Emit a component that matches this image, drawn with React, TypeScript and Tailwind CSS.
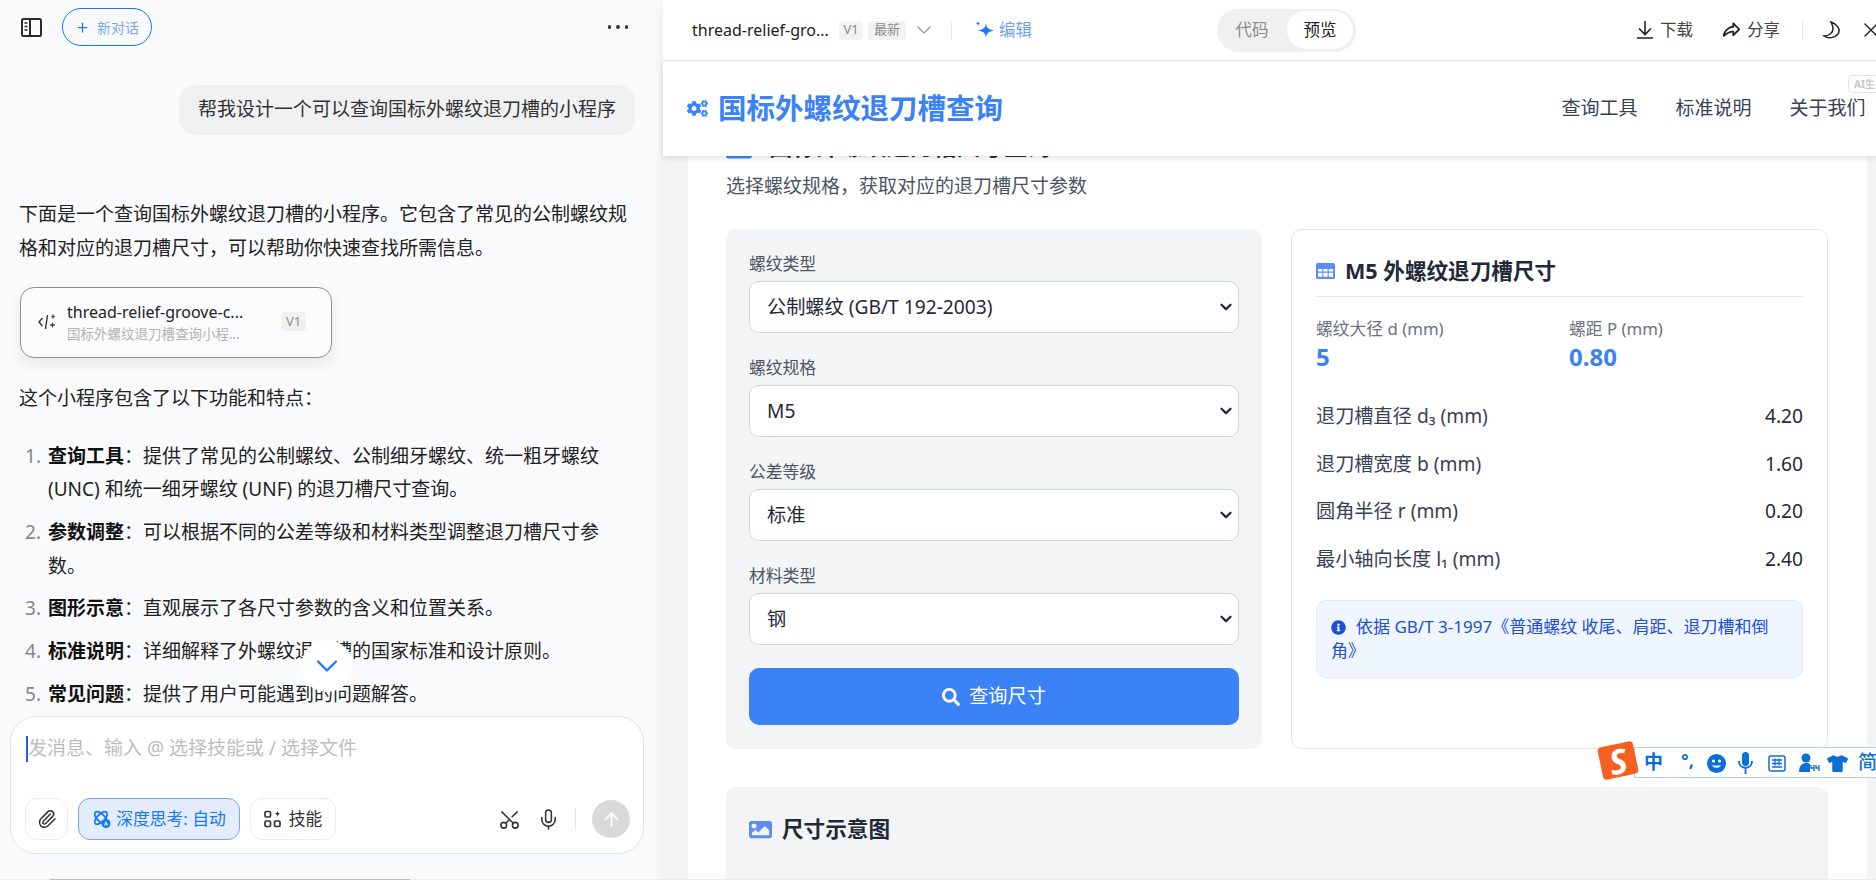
import { ArrowUp, ChevronDown, Mic, Paperclip, Plus, Scissors, X } from "lucide-react";
import { FaCogs, FaImage, FaInfoCircle, FaSearch, FaTable, FaTshirt } from "react-icons/fa";
import { PiShareFatBold } from "react-icons/pi";

const font = "font-['Noto_Sans','Noto_Sans_CJK_SC',sans-serif]";

function SidebarIcon() {
  return (
    <svg width="21" height="19" viewBox="0 0 21 19" fill="none" stroke="#2b2b2b">
      <rect x="1" y="1" width="19" height="17" rx="1.5" strokeWidth="2" />
      <path d="M9 1v17" strokeWidth="2" />
      <path d="M3.5 5h3M3.5 8.5h3M3.5 12h3" strokeWidth="1.4" />
    </svg>
  );
}

function Sparkles() {
  return (
    <svg width="19" height="19" viewBox="0 0 19 19" fill="#1677ff">
      <path d="M11 2.500c.7 4.500 2.200 6 8 7-5.800 1-7.300 2.500-8 7.500-.7-5-2.200-6.500-8-7.500 5.800-1 7.300-2.500 8-7z" />
      <path d="M3 0c.3 1.700.8 2.200 2.500 2.500C3.800 2.800 3.300 3.300 3 5c-.3-1.700-.8-2.200-2.500-2.500C2.200 2.200 2.700 1.700 3 0z" />
    </svg>
  );
}

function CodeSpark() {
  return (
    <svg width="19" height="18" viewBox="0 0 19 18" fill="none" stroke="#333" strokeWidth="1.4">
      <path d="M4.500 5 1 9l3.500 4" />
      <path d="M9.500 2 7.500 16" />
      <path d="M15 1.500c.2 1.500.6 1.900 1.800 2.100-1.200.2-1.600.6-1.800 2.100-.2-1.500-.6-1.900-1.800-2.100 1.200-.2 1.600-.6 1.800-2.100zM14.500 9.500c.2 1.800.7 2.300 2.500 2.500-1.800.2-2.300.7-2.500 2.500-.2-1.800-.7-2.300-2.500-2.500 1.800-.2 2.300-.7 2.500-2.500z" fill="#333" strokeWidth="0.5" />
    </svg>
  );
}

function AtomIcon() {
  return (
    <svg width="20" height="20" viewBox="0 0 20 20" fill="none" stroke="#1677ff" strokeWidth="1.800">
      <ellipse cx="9" cy="9" rx="3.800" ry="8" transform="rotate(45 9 9)" />
      <ellipse cx="9" cy="9" rx="3.800" ry="8" transform="rotate(-45 9 9)" />
      <circle cx="14" cy="14.500" r="4.500" fill="#1677ff" stroke="none" />
      <path d="M12.500 16.500 14 12.800l1.500 3.700M13 15.300h2" stroke="#fff" strokeWidth="0.9" />
    </svg>
  );
}

function SkillsIcon() {
  return (
    <svg width="18" height="18" viewBox="0 0 18 18" fill="none" stroke="#333" strokeWidth="1.700">
      <rect x="1" y="1.500" width="5.500" height="5.500" rx="1.200" />
      <rect x="1" y="11" width="5.500" height="5.500" rx="1.200" />
      <rect x="10.500" y="11" width="5.500" height="5.500" rx="1.200" />
      <path d="M13.500 0.500c.3 2.300.9 2.900 3.300 3.300-2.400.4-3 1-3.300 3.300-.3-2.300-.9-2.900-3.300-3.300 2.400-.4 3-1 3.300-3.300z" fill="#333" stroke="none" />
    </svg>
  );
}

function DownloadIcon() {
  return (
    <svg width="16" height="18" viewBox="0 0 16 18" fill="none" stroke="#222" strokeWidth="1.600" className="shrink-0">
      <path d="M8 0v13M2 7.500 8 13.500l6-6M0 17h16" />
    </svg>
  );
}

function MoonIcon() {
  return (
    <svg width="20" height="18" viewBox="0 0 20 18" fill="none" stroke="#222" strokeWidth="1.500" className="ml-[19px] shrink-0">
      <path d="M9 1c6 2 10 7 7 12-3 4-10 5-14 2 5 0 9-3 9-7 0-3-1-5-2-7z" />
    </svg>
  );
}

function TableIcon() {
  return (
    <svg width="19" height="16" viewBox="0 0 19 16" fill="none">
      <rect width="19" height="16" rx="1.500" fill="#5b8cf7" />
      <path d="M2 6h4.300v2.500H2zM7.300 6h4.400v2.500H7.300zM12.700 6H17v2.500h-4.300zM2 9.800h4.300v4H2zM7.300 9.800h4.400v4H7.300zM12.700 9.800H17v4h-4.300z" fill="#fff" />
    </svg>
  );
}

function ImeToolbar() {
  return (
    <div className="absolute left-[1598px] top-[742px] z-30 h-[38px] w-[278px]">
      <div className="absolute left-[36px] top-[5px] flex h-[31px] w-[243px] items-center border-y border-l border-[#b9cfe8] bg-white text-[#0a6fd8]">
        <span className="absolute left-[9px] text-[19px] font-bold leading-none">中</span>
        <span className="absolute left-[46px] top-[3px] text-[18px] font-bold leading-none">°,</span>
        <svg className="absolute left-[72px] top-[6px]" width="19" height="19" viewBox="0 0 19 19">
          <circle cx="9.500" cy="9.500" r="9.500" fill="#0a6fd8" />
          <circle cx="6.500" cy="7" r="1.600" fill="#fff" />
          <circle cx="12.500" cy="7" r="1.600" fill="#fff" />
          <path d="M5 11.500c1.500 3 7.500 3 9 0z" fill="#fff" />
        </svg>
        <svg className="absolute left-[103px] top-[4px]" width="15" height="23" viewBox="0 0 15 23" fill="none" stroke="#0a6fd8" strokeWidth="1.800">
          <rect x="4" y="0" width="7" height="14" rx="3.500" fill="#0a6fd8" stroke="none" />
          <path d="M1 9c0 9 13 9 13 0M7.500 16v6" />
        </svg>
        <svg className="absolute left-[133px] top-[7px]" width="18" height="17" viewBox="0 0 18 17" fill="none" stroke="#0a6fd8" strokeWidth="1.500">
          <rect x="1" y="1" width="16" height="15" rx="2" />
          <path d="M4 5h10M4 8.500h10M4 12h10M7 3.500v7M11 3.500v7" strokeWidth="1.300" />
        </svg>
        <svg className="absolute left-[164px] top-[5px]" width="21" height="20" viewBox="0 0 21 20" fill="#0a6fd8">
          <circle cx="7" cy="5" r="4.500" />
          <path d="M0 19c0-6 3-9 7-9 2 0 3 .5 4 1v8z" />
          <path d="M12 12v3h3v-3M15 15v3M17 12v3h3v-3M20 15v3" fill="none" stroke="#0a6fd8" strokeWidth="1.300" />
        </svg>
        <FaTshirt className="absolute left-[192px] top-[5px]" size={21} />
        <span className="absolute left-[223px] text-[19px] font-medium leading-none">简</span>
      </div>
      <div className="absolute left-[2px] top-[2px] flex h-[33px] w-[36px] -rotate-12 items-center justify-center rounded-[4px] bg-[#f9601f] text-[34px] font-bold italic leading-none text-white">
        S
      </div>
    </div>
  );
}

function ThreadSelect({ label, value }: { label: string; value: string }) {
  return (
    <div>
      <label className="mb-[6px] block text-[16.800px] leading-[23px] text-[#4b5563]">{label}</label>
      <div className="relative">
        <select
          defaultValue={value}
          className="h-[52px] w-full appearance-none rounded-[10px] border border-[#d1d5db] bg-white pl-[17px] text-[19.200px] text-[#1f2937]"
        >
          <option>{value}</option>
        </select>
        <ChevronDown size={18} strokeWidth={3} className="absolute right-[4px] top-[17px] text-[#1f2937]" />
      </div>
    </div>
  );
}

function DimRow({ label, sub, unit, value }: { label: string; sub?: string; unit: string; value: string }) {
  return (
    <div className="flex h-[47.500px] items-center justify-between text-[19.200px] text-[#374151]">
      <span>
        {label} {sub}
        {unit}
      </span>
      <span className="text-[#1f2937]">{value}</span>
    </div>
  );
}

export default function App() {
  const features = [
    ["查询工具", "：提供了常见的公制螺纹、公制细牙螺纹、统一粗牙螺纹 (UNC) 和统一细牙螺纹 (UNF) 的退刀槽尺寸查询。"],
    ["参数调整", "：可以根据不同的公差等级和材料类型调整退刀槽尺寸参数。"],
    ["图形示意", "：直观展示了各尺寸参数的含义和位置关系。"],
    ["标准说明", "：详细解释了外螺纹退刀槽的国家标准和设计原则。"],
    ["常见问题", "：提供了用户可能遇到的问题解答。"],
  ];

  return (
    <div className={`relative flex h-[880px] w-[1876px] overflow-hidden bg-white ${font}`}>
      {/* chat column */}
      <aside className="relative flex h-full w-[663px] shrink-0 flex-col bg-[#f9fafc]">
        <header className="flex h-[54px] shrink-0 items-center pl-[21px] pr-[35px]">
          <SidebarIcon />
          <button className="ml-[20px] flex h-[38px] w-[90px] items-center justify-center gap-[7px] rounded-full border border-[#1677ff] text-[14px] text-[#7da6f5]">
            <Plus size={15} strokeWidth={2} className="text-[#1677ff]" />
            新对话
          </button>
          <div className="ml-auto flex gap-[5px]">
            <span className="h-[3.500px] w-[3.500px] rounded-full bg-[#333]" />
            <span className="h-[3.500px] w-[3.500px] rounded-full bg-[#333]" />
            <span className="h-[3.500px] w-[3.500px] rounded-full bg-[#333]" />
          </div>
        </header>

        <div className="min-h-0 flex-1 overflow-hidden pl-[19px] pr-[28px] pt-[31px] text-[19px] leading-[33.600px] text-[#222]">
          <div className="flex justify-end">
            <div className="flex h-[50px] w-[456px] items-center justify-center rounded-[16px] bg-[#f0f1f3] text-[#333]">
              帮我设计一个可以查询国标外螺纹退刀槽的小程序
            </div>
          </div>

          <p className="mt-[63px]">下面是一个查询国标外螺纹退刀槽的小程序。它包含了常见的公制螺纹规格和对应的退刀槽尺寸，可以帮助你快速查找所需信息。</p>

          <div className="ml-[1px] mt-[22px] flex h-[71px] w-[312px] items-center rounded-[14px] border border-[#8f8f8f] bg-[#fafbfd] pb-[2px] pl-[17px] shadow-[0_6px_14px_rgba(0,0,0,0.08)]">
            <CodeSpark />
            <div className="ml-[10px] w-[182px]">
              <div className="truncate text-[16px] leading-[24px] text-[#222]">thread-relief-groove-c...</div>
              <div className="truncate text-[13.500px] leading-[20px] text-[#b3b3b3]">国标外螺纹退刀槽查询小程...</div>
            </div>
            <span className="ml-[32px] flex h-[19px] w-[25px] items-center justify-center rounded-[4px] bg-[#f0f0f0] text-[13px] text-[#8c8c8c]">V1</span>
          </div>

          <p className="mt-[24px]">这个小程序包含了以下功能和特点：</p>

          <ol className="mt-[24px] flex flex-col gap-[9.100px]">
            {features.map(([name, text], i) => (
              <li key={name} className="flex">
                <span className="w-[29px] shrink-0 pl-[6px] text-[#888]">{i + 1}.</span>
                <div>
                  <strong className="font-bold text-[#111]">{name}</strong>
                  {text}
                </div>
              </li>
            ))}
          </ol>
        </div>

        <button className="absolute left-[301px] top-[640px] z-10 flex h-[52px] w-[52px] items-center justify-center rounded-full bg-white text-[#1677ff]">
          <ChevronDown size={36} strokeWidth={1.500} />
        </button>

        <div className="mb-[26px] ml-[10px] mr-[19px] flex h-[138px] shrink-0 flex-col rounded-[26px] border border-[#e3e3e3] bg-white pb-[13px] pl-[14px] pr-[13px] pt-[18px]">
          <div className="ml-[1px] flex h-[27px] items-center text-[19px] text-[#bdbdbd]">
            <span className="h-[26px] w-[2px] bg-[#1f5fe0]" />
            发消息、输入 @ 选择技能或 / 选择文件
          </div>
          <div className="mt-auto flex items-center">
            <button className="flex h-[42px] w-[43px] items-center justify-center rounded-[12px] border border-[#ececec] text-[#333]">
              <Paperclip size={20} strokeWidth={1.800} />
            </button>
            <button className="ml-[10px] flex h-[42px] w-[162px] items-center justify-center gap-[4px] rounded-[12px] border border-[#78a4f2] bg-[#e3edff] text-[16.800px] text-[#1677ff]">
              <AtomIcon />
              深度思考: 自动
            </button>
            <button className="ml-[10px] flex h-[42px] w-[86px] items-center justify-center gap-[7px] rounded-[12px] border border-[#ececec] text-[16.800px] text-[#333]">
              <SkillsIcon />
              技能
            </button>
            <Scissors size={23} strokeWidth={1.600} className="ml-auto rotate-[-90deg] text-[#333]" />
            <Mic size={23} strokeWidth={1.600} className="ml-[16px] text-[#333]" />
            <span className="ml-[15px] h-[22px] w-px bg-[#e5e5e5]" />
            <span className="ml-[16px] flex h-[38px] w-[38px] items-center justify-center rounded-full bg-[#d9d9d9] text-white">
              <ArrowUp size={21} />
            </span>
          </div>
        </div>
      </aside>

      {/* preview column */}
      <section className="z-10 flex h-full min-w-0 flex-1 flex-col bg-[#f3f4f6] shadow-[-2px_0_10px_rgba(0,0,0,0.05)]">
        <header className="flex h-[61px] shrink-0 items-center overflow-hidden whitespace-nowrap border-b border-[#e8e8e8] bg-white pl-[29px] text-[16.500px]">
          <span className="w-[139px] shrink-0 text-[16px] text-[#222]">thread-relief-gro...</span>
          <span className="ml-[8px] flex h-[19px] w-[24px] shrink-0 items-center justify-center rounded-[4px] bg-[#f3f3f3] text-[13px] text-[#8c8c8c]">V1</span>
          <span className="ml-[5px] flex h-[19px] w-[38px] shrink-0 items-center justify-center rounded-[4px] bg-[#f3f3f3] text-[13px] text-[#8c8c8c]">最新</span>
          <ChevronDown size={24} strokeWidth={1.200} className="ml-[6px] shrink-0 text-[#999]" />
          <span className="ml-[15px] h-[19px] w-px shrink-0 bg-[#e8e8e8]" />
          <span className="ml-[23px] shrink-0">
            <Sparkles />
          </span>
          <span className="ml-[5px] w-[33px] shrink-0 text-[#6f9ff5]">编辑</span>

          <div className="ml-[185px] flex h-[43px] w-[139px] shrink-0 items-center rounded-full bg-[#f0f0f0] pr-[3px]">
            <span className="w-[70px] text-center text-[#8c8c8c]">代码</span>
            <span className="flex h-[38px] w-[66px] items-center justify-center rounded-full bg-white text-[#222]">预览</span>
          </div>

          <button className="ml-[281px] flex w-[56px] shrink-0 items-center gap-[7px] text-[#444]">
            <DownloadIcon />
            下载
          </button>
          <button className="ml-[29px] flex w-[58px] shrink-0 items-center gap-[6px] text-[#444]">
            <PiShareFatBold size={19} className="shrink-0 text-[#222]" />
            分享
          </button>
          <span className="ml-[22px] h-[19px] w-px shrink-0 bg-[#e8e8e8]" />
          <MoonIcon />
          <X size={24} strokeWidth={1.400} className="ml-[17px] shrink-0 text-[#222]" />
        </header>

        <nav className="relative z-20 flex h-[95px] shrink-0 items-center bg-white pl-[24px] shadow-[0_2px_6px_rgba(0,0,0,0.12)]">
          <FaCogs size={21} className="text-[#3b82f6]" />
          <span className="ml-[10px] text-[28.500px] font-bold text-[#3b82f6]">国标外螺纹退刀槽查询</span>
          <div className="ml-auto flex gap-[38px] pr-[10.500px] text-[19px] text-[#374151]">
            <span>查询工具</span>
            <span>标准说明</span>
            <span>关于我们</span>
          </div>
          <span className="absolute right-0 top-[14px] flex h-[18px] w-[28px] items-center overflow-hidden rounded-l-[5px] border-y border-l border-[#e5e5e5] pl-[5px] text-[10px] font-bold leading-none text-[#c8c8c8]">
            AI生
          </span>
        </nav>

        <main className="min-h-0 flex-1 overflow-hidden pl-[25px] pr-[9px]">
          <div className="h-[800px] bg-white pl-[38px] pr-[39px]">
            <h1 className="-mt-[24px] flex h-[30px] items-center gap-[17px] text-[23.500px] font-bold text-[#1f2937]">
              <FaTable size={26} className="text-[#3b82f6]" />
              国标外螺纹退刀槽尺寸查询
            </h1>
            <p className="mt-[10px] text-[19px] leading-[28px] text-[#4b5563]">选择螺纹规格，获取对应的退刀槽尺寸参数</p>

            <div className="mt-[29px] flex gap-[29px]">
              <div className="flex h-[520px] w-[536px] shrink-0 flex-col gap-[23px] rounded-[10px] bg-[#f3f4f6] px-[23px] pt-[23px]">
                <ThreadSelect label="螺纹类型" value="公制螺纹 (GB/T 192-2003)" />
                <ThreadSelect label="螺纹规格" value="M5" />
                <ThreadSelect label="公差等级" value="标准" />
                <ThreadSelect label="材料类型" value="钢" />
                <button className="flex h-[57px] w-full shrink-0 items-center justify-center gap-[9px] rounded-[10px] bg-[#3b82f6] text-[19.200px] text-white">
                  <FaSearch size={18} />
                  查询尺寸
                </button>
              </div>

              <div className="h-[520px] w-[537px] shrink-0 rounded-[10px] border border-[#e5e7eb] bg-white px-[24px]">
                <h2 className="flex h-[67px] items-center gap-[10px] border-b border-[#e5e7eb] pb-[4px] pt-[20px] text-[21.600px] font-bold text-[#1f2937]">
                  <TableIcon />
                  M5 外螺纹退刀槽尺寸
                </h2>
                <div className="mt-[20px] flex">
                  <div className="w-[253px]">
                    <div className="text-[16.800px] leading-[23px] text-[#6b7280]">螺纹大径 d (mm)</div>
                    <div className="text-[24px] font-bold leading-[33px] text-[#3b82f6]">5</div>
                  </div>
                  <div>
                    <div className="text-[16.800px] leading-[23px] text-[#6b7280]">螺距 P (mm)</div>
                    <div className="text-[24px] font-bold leading-[33px] text-[#3b82f6]">0.80</div>
                  </div>
                </div>
                <div className="mt-[20px]">
                  <DimRow label="退刀槽直径" sub="d₃" unit=" (mm)" value="4.20" />
                  <DimRow label="退刀槽宽度" sub="b" unit=" (mm)" value="1.60" />
                  <DimRow label="圆角半径" sub="r" unit=" (mm)" value="0.20" />
                  <DimRow label="最小轴向长度" sub="l₁" unit=" (mm)" value="2.40" />
                </div>
                <div className="mt-[17px] h-[78px] rounded-[10px] border border-[#dbeafe] bg-[#eff6ff] px-[14px] pt-[14px] text-[17px] leading-[24px] text-[#1d4ed8]">
                  <span className="mr-[10px] inline-flex align-[-2px]">
                    <FaInfoCircle size={15} />
                  </span>
                  依据 GB/T 3-1997《普通螺纹 收尾、肩距、退刀槽和倒角》
                </div>
              </div>
            </div>

            <div className="mt-[38px] h-[120px] rounded-t-[10px] bg-[#f3f4f6] px-[23px] pt-[28px]">
              <h2 className="flex items-center gap-[10px] text-[21.600px] font-bold leading-[28px] text-[#1f2937]">
                <FaImage size={23} className="text-[#5b8cf7]" />
                尺寸示意图
              </h2>
            </div>
          </div>
        </main>
      </section>

      <ImeToolbar />

      <div className="absolute bottom-0 left-0 z-20 h-[1px] w-full bg-[#ececec]">
        <div className="ml-[50px] h-full w-[360px] bg-[#bdbdbd]" />
      </div>
    </div>
  );
}
